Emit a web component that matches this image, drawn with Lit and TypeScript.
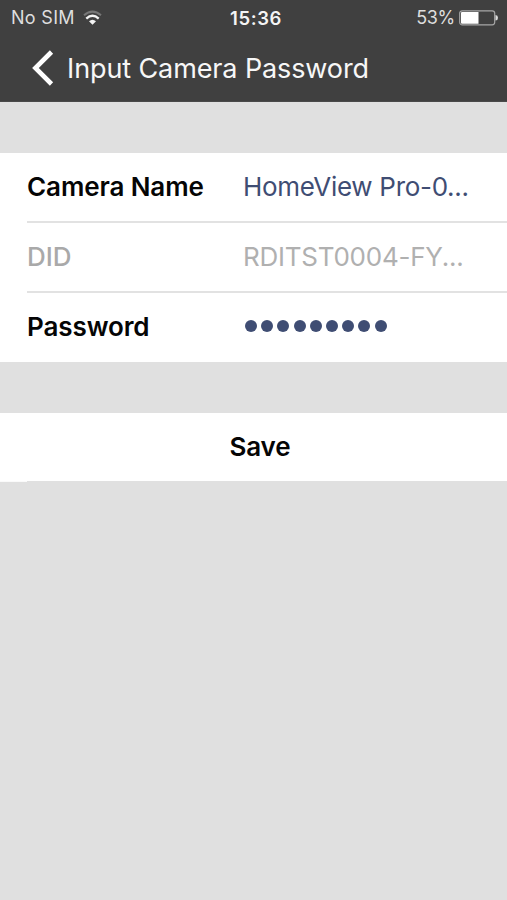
import { LitElement, html, css } from "lit";
import { customElement } from "lit/decorators.js";

@customElement("app-root")
export class AppRoot extends LitElement {
  static styles = css`
    :host {
      display: flex;
      flex-direction: column;
      height: 900px;
      overflow: hidden;
      background: #e0e0e0;
      font-family: Inter, "Liberation Sans", sans-serif;
      color: #050505;
      white-space: nowrap;
    }
    header {
      height: 102px;
      background: #404040;
      color: #f7f7f7;
      box-sizing: border-box;
      border-bottom: 1px solid #4a4a4a;
    }
    .status {
      display: grid;
      grid-template-columns: 1fr auto 1fr;
      height: 35px;
      align-items: center;
      padding: 0 9px 0 11px;
      font-size: 18px;
      color: #dedede;
    }
    .carrier, .power { display: flex; align-items: center; }
    .carrier { gap: 8px; letter-spacing: 0.3px; }
    .power { justify-content: flex-end; gap: 4px; letter-spacing: -0.3px; }
    .time { font-weight: 600; color: #f4f4f4; font-size: 18.5px; letter-spacing: 0.6px; margin-left: 3px; }
    .nav { display: flex; align-items: center; height: 66px; padding-left: 32px; }
    .title { margin-left: 13px; font-size: 27px; letter-spacing: -0.11px; }
    svg { display: block; flex: none; }
    .form { margin-top: 51px; background: #fff; padding-left: 27px; height: 209px; }
    .row {
      display: flex;
      align-items: center;
      height: 70px;
      box-sizing: border-box;
      border-bottom: 2px solid #e2e2e2;
      padding-bottom: 2px;
      font-size: 26px;
    }
    .row:last-child { border-bottom: 0; padding-bottom: 4px; }
    .label { width: 216px; font-weight: 600; letter-spacing: -0.1px; }
    .value { color: #3f4d73; letter-spacing: -0.3px; }
    .muted .label { color: #a9a9a9; font-weight: 500; }
    .muted .value { color: #b0b0b0; letter-spacing: -0.24px; }
    .dots { display: flex; gap: 4.2px; padding-left: 2px; }
    .dot { width: 12px; height: 12px; border-radius: 50%; background: #3f4d73; }
    .save {
      margin-top: 51px;
      height: 68px;
      box-sizing: border-box;
      background: #fff;
      display: flex;
      align-items: center;
      justify-content: center;
      padding: 0 0 2px 13px;
      font-size: 26px;
      font-weight: 600;
      letter-spacing: -0.2px;
    }
    .edge { width: 27px; height: 1px; background: #fafafa; }
  `;

  render() {
    return html`
      <header>
        <div class="status">
          <div class="carrier">
            <span>No SIM</span>
            <svg width="19" height="16" viewBox="0 0 19 16" fill="none" stroke-width="2">
              <path d="M1 5.2Q9.5 -2 18 5.2" stroke="#777" />
              <path d="M3.3 8.6Q9.5 3 15.7 8.6" stroke="#f4f4f4" stroke-width="2.3" />
              <path d="M6 11.3Q9.5 8.2 13 11.3L9.5 14.8Z" fill="#f4f4f4" />
            </svg>
          </div>
          <span class="time">15:36</span>
          <div class="power">
            <span>53%</span>
            <svg width="39" height="16" viewBox="0 0 39 16">
              <rect x="0.7" y="0.8" width="35" height="14" rx="2.5" fill="none" stroke="#a6a6a6" stroke-width="1.2" />
              <path d="M3 2H19.5V13.8H3Q2 13.8 2 12.8V3Q2 2 3 2Z" fill="#fff" />
              <path d="M36.5 5Q39 5.2 39 7.8Q39 10.4 36.5 10.6Z" fill="#dcdcdc" />
            </svg>
          </div>
        </div>
        <div class="nav">
          <svg width="22" height="36" viewBox="0 0 22 36" fill="none" stroke="#fff" stroke-width="4.6">
            <path d="M19.5 2L3.4 18L19.5 34" />
          </svg>
          <span class="title">Input Camera Password</span>
        </div>
      </header>
      <section class="form">
        <div class="row"><span class="label">Camera Name</span><span class="value">HomeView Pro-0...</span></div>
        <div class="row muted"><span class="label">DID</span><span class="value">RDITST0004-FY...</span></div>
        <div class="row">
          <span class="label">Password</span>
          <span class="dots">${Array.from({ length: 9 }, () => html`<i class="dot"></i>`)}</span>
        </div>
      </section>
      <div class="save">Save</div>
      <div class="edge"></div>
    `;
  }
}
